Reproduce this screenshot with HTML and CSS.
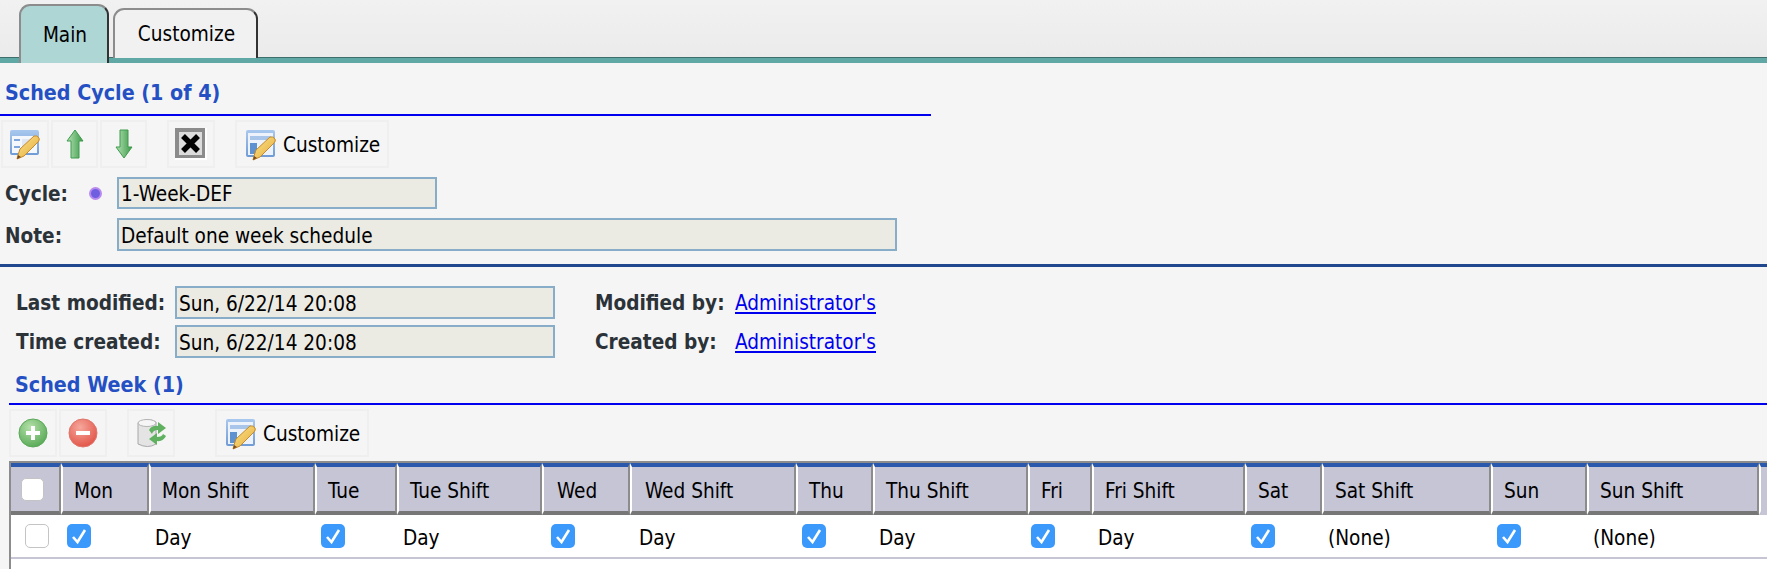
FILE: index.html
```html
<!DOCTYPE html>
<html>
<head>
<meta charset="utf-8">
<title>Sched Cycle</title>
<link rel="stylesheet" href="styles.css">
</head>
<body>

<svg class="defs" width="0" height="0">
	<defs>
		<linearGradient id="winfill" x1="0" y1="0" x2="0" y2="1">
			<stop offset="0" stop-color="#a9c8ee"/>
			<stop offset="1" stop-color="#6f9bd6"/>
		</linearGradient>
		<linearGradient id="pencil" x1="0" y1="0" x2="1" y2="1">
			<stop offset="0" stop-color="#fbe58a"/>
			<stop offset="1" stop-color="#e5a93a"/>
		</linearGradient>
		<linearGradient id="arrow" x1="0" y1="0" x2="1" y2="0">
			<stop offset="0" stop-color="#b4e2b4"/>
			<stop offset="1" stop-color="#3d9a4a"/>
		</linearGradient>
		<radialGradient id="plusfill" cx="0.4" cy="0.3" r="0.8">
			<stop offset="0" stop-color="#b4e0a8"/>
			<stop offset="1" stop-color="#4fa44f"/>
		</radialGradient>
		<radialGradient id="minusfill" cx="0.4" cy="0.3" r="0.8">
			<stop offset="0" stop-color="#f6a79c"/>
			<stop offset="1" stop-color="#e04b3f"/>
		</radialGradient>
		<symbol id="pen" viewBox="0 0 32 32">
			<path d="M9 27 L11 21 L25 8 Q28 7 30 10 Q31 12 29 14 L15 28 L8 31 Z" fill="url(#pencil)" stroke="#c58a2c" stroke-width="1"/>
			<path d="M8 31 L9 27 L12 29 Z" fill="#7a4a1e"/>
		</symbol>
		<symbol id="ico-edit" viewBox="0 0 32 32">
			<rect x="1" y="2" width="29" height="25" rx="2" fill="url(#winfill)"/>
			<rect x="3" y="8" width="25" height="17" fill="#f4f7fc"/>
			<rect x="5" y="11" width="6" height="2" fill="#7ea6dc"/>
			<rect x="5" y="18" width="6" height="2" fill="#7ea6dc"/>
			<rect x="13" y="11" width="12" height="9" fill="#dfe7f3"/>
			<use href="#pen"/>
		</symbol>
		<symbol id="ico-custom" viewBox="0 0 32 32">
			<rect x="1" y="1" width="29" height="27" rx="2" fill="url(#winfill)"/>
			<rect x="3" y="4" width="25" height="22" fill="#eef3fb"/>
			<rect x="5" y="7" width="21" height="4" fill="#a9c6ea"/>
			<rect x="5" y="14" width="7" height="11" fill="#5f90d0"/>
			<use href="#pen"/>
		</symbol>
	</defs>
</svg>

<div class="tabbar">
	<div class="tab tab-active">Main</div>
	<div class="tab">Customize</div>
</div>

<div class="heading heading-cycle">Sched Cycle (1 of 4)</div>

<div class="toolbar">
	<div class="tool"><svg class="ico" viewBox="0 0 32 32"><use href="#ico-edit"/></svg></div>
	<div class="tool tool-thin"><svg class="ico" viewBox="0 0 32 32"><path d="M16 2 L24 13 L20 13 L20 30 L12 30 L12 13 L8 13 Z" fill="url(#arrow)" stroke="#3f9a4c" stroke-width="1"/></svg></div>
	<div class="tool tool-thin"><svg class="ico" viewBox="0 0 32 32"><path d="M16 30 L24 19 L20 19 L20 2 L12 2 L12 19 L8 19 Z" fill="url(#arrow)" stroke="#3f9a4c" stroke-width="1"/></svg></div>
	<div class="tool tool-gap"><svg class="ico" viewBox="0 0 32 32"><rect x="0" y="0" width="32" height="32" fill="#fff"/><rect x="0" y="0" width="30" height="30" fill="#8b8b8b"/><rect x="4" y="4" width="23" height="23" fill="#dcdcdc"/><path d="M8 8 L23 23 M23 8 L8 23" stroke="#000" stroke-width="5.5"/></svg></div>
	<div class="tool tool-gap tool-text"><svg class="ico" viewBox="0 0 32 32"><use href="#ico-custom"/></svg>Customize</div>
</div>

<div class="form-row row-cycle">
	<span class="label">Cycle:</span>
	<span class="dot"></span>
	<div class="field field-cycle">1-Week-DEF</div>
</div>
<div class="form-row row-note">
	<span class="label">Note:</span>
	<div class="field field-note">Default one week schedule</div>
</div>

<div class="divider"></div>

<div class="meta">
	<div class="meta-row">
		<span class="label meta-label">Last modified:</span>
		<div class="field field-meta">Sun, 6/22/14 20:08</div>
		<span class="label by-label">Modified by:</span>
		<a class="link" href="#">Administrator's</a>
	</div>
	<div class="meta-row">
		<span class="label meta-label">Time created:</span>
		<div class="field field-meta">Sun, 6/22/14 20:08</div>
		<span class="label by-label">Created by:</span>
		<a class="link" href="#">Administrator's</a>
	</div>
</div>

<div class="week">
	<div class="heading heading-week">Sched Week (1)</div>

	<div class="toolbar toolbar-week">
		<div class="tool"><svg class="ico" viewBox="0 0 32 32"><circle cx="16" cy="16" r="14" fill="url(#plusfill)" stroke="#5aa85a"/><path d="M16 9 V23 M9 16 H23" stroke="#fff" stroke-width="4"/></svg></div>
		<div class="tool"><svg class="ico" viewBox="0 0 32 32"><circle cx="16" cy="16" r="14" fill="url(#minusfill)" stroke="#e0756a"/><path d="M9 16 H23" stroke="#fff" stroke-width="4"/></svg></div>
		<div class="tool tool-gap"><svg class="ico" viewBox="0 0 32 32"><path d="M3 6 Q13 0 21 5 V27 Q13 32 3 27 Z" fill="#e4e4e4" stroke="#a8a8a8"/><ellipse cx="12" cy="6" rx="9" ry="3.5" fill="#f6f6f6" stroke="#b4b4b4"/><path d="M14 13 Q17 8 23 9 V5 L31 11 L23 17 V13 Q18 13 17 17 Z" fill="#5fb05f"/><path d="M31 19 Q28 25 22 24 V28 L14 22 L22 16 V20 Q27 20 28 17 Z" fill="#5fb05f"/></svg></div>
		<div class="tool tool-gap2 tool-text"><svg class="ico" viewBox="0 0 32 32"><use href="#ico-custom"/></svg>Customize</div>
	</div>

	<table class="grid">
		<colgroup>
			<col class="c-check"><col class="c-mon"><col class="c-monshift"><col class="c-tue"><col class="c-tueshift">
			<col class="c-wed"><col class="c-wedshift"><col class="c-thu"><col class="c-thushift"><col class="c-fri">
			<col class="c-frishift"><col class="c-sat"><col class="c-satshift"><col class="c-sun"><col class="c-sunshift"><col class="c-end">
		</colgroup>
		<thead>
			<tr>
				<th class="th-check"><span class="box box-head"></span></th>
				<th>Mon</th><th>Mon Shift</th>
				<th>Tue</th><th>Tue Shift</th>
				<th class="th-wed">Wed</th><th class="th-wed">Wed Shift</th>
				<th>Thu</th><th>Thu Shift</th>
				<th>Fri</th><th>Fri Shift</th>
				<th>Sat</th><th>Sat Shift</th>
				<th>Sun</th><th>Sun Shift</th>
				<th class="th-end"></th>
			</tr>
		</thead>
		<tbody>
			<tr>
				<td class="td-first"><span class="box"></span></td>
				<td><span class="box box-on"><svg viewBox="0 0 24 24"><path d="M6 13 L10.5 18 L18 6" fill="none" stroke="#fff" stroke-width="2.6"/></svg></span></td><td>Day</td>
				<td><span class="box box-on"><svg viewBox="0 0 24 24"><path d="M6 13 L10.5 18 L18 6" fill="none" stroke="#fff" stroke-width="2.6"/></svg></span></td><td>Day</td>
				<td class="td-wed"><span class="box box-on"><svg viewBox="0 0 24 24"><path d="M6 13 L10.5 18 L18 6" fill="none" stroke="#fff" stroke-width="2.6"/></svg></span></td><td class="td-wed">Day</td>
				<td><span class="box box-on"><svg viewBox="0 0 24 24"><path d="M6 13 L10.5 18 L18 6" fill="none" stroke="#fff" stroke-width="2.6"/></svg></span></td><td>Day</td>
				<td class="td-fri"><span class="box box-on"><svg viewBox="0 0 24 24"><path d="M6 13 L10.5 18 L18 6" fill="none" stroke="#fff" stroke-width="2.6"/></svg></span></td><td>Day</td>
				<td><span class="box box-on"><svg viewBox="0 0 24 24"><path d="M6 13 L10.5 18 L18 6" fill="none" stroke="#fff" stroke-width="2.6"/></svg></span></td><td>(None)</td>
				<td><span class="box box-on"><svg viewBox="0 0 24 24"><path d="M6 13 L10.5 18 L18 6" fill="none" stroke="#fff" stroke-width="2.6"/></svg></span></td><td>(None)</td>
				<td></td>
			</tr>
			<tr class="filler"><td colspan="16"></td></tr>
		</tbody>
	</table>
</div>

</body>
</html>
```

FILE: styles.css
```css
html,body{
	margin: 0;
	height: 569px;
	overflow: hidden;
}
body{
	background: #f5f5f5;
	font-family: "DejaVu Sans", sans-serif;
	font-stretch: condensed;
	font-size: 20.6px;
	color: #000;
}
.defs{
	display: block;
	height: 0;
}

/* tabs */
.tabbar{
	display: flex;
	align-items: flex-end;
	height: 54px;
	padding: 4px 0 0 19px;
	background: linear-gradient(#f1f1f1,#ebebeb);
	border-bottom: 5px solid #5fa8a5;
	box-shadow: inset 0 -1px 0 #3d6f6d;
}
.tab{
	box-sizing: border-box;
	text-align: center;
	background: #f1f1f1;
	border: 2px solid #8c8c8c;
	border-right-color: #333;
	border-bottom: 0;
	border-radius: 11px 11px 0 0;
}
.tab-active{
	width: 90px;
	height: 59px;
	margin-bottom: -5px;
	padding: 17px 0 0 2px;
	margin-right: 4px;
	background: #aed6d5;
	position: relative;
}
.tab:not(.tab-active){
	width: 145px;
	height: 50px;
	padding: 12px 0 0 2px;
}

/* headings */
.heading{
	font-weight: bold;
	font-size: 21.3px;
	color: #2450c4;
	box-sizing: border-box;
	border-bottom: 2px solid #0000ee;
}
.heading-cycle{
	width: 931px;
	height: 53px;
	padding: 17px 0 0 5px;
}
.heading-week{
	height: 31px;
	padding: 0 0 0 6px;
	line-height: 22px;
	margin-top: 2px;
}

/* toolbars */
.toolbar{
	display: flex;
	gap: 2px;
	height: 48px;
	padding: 4px 0 0 1px;
}
.toolbar-week{
	padding-left: 0;
}
.tool{
	box-sizing: border-box;
	width: 48px;
	height: 48px;
	display: flex;
	align-items: center;
	justify-content: center;
	border: 2px solid #efefef;
}
.tool-thin{
	width: 47px;
}
.tool-gap{
	margin-left: 18px;
}
.tool-gap2{
	margin-left: 38px;
}
.tool-text{
	width: 154px;
	justify-content: flex-start;
	padding: 1px 0 0 8px;
	gap: 6px;
}
.ico{
	width: 32px;
	height: 32px;
	flex: none;
}

/* form fields */
.label{
	font-weight: bold;
	color: #2b3238;
}
.form-row{
	display: flex;
	align-items: center;
	padding-left: 5px;
}
.form-row .label{
	padding-top: 2px;
}
.row-cycle{
	margin-top: 9px;
	height: 32px;
}
.row-note{
	margin-top: 9px;
	height: 33px;
}
.row-cycle .label{
	width: 84px;
}
.row-note .label{
	width: 112px;
}
.dot{
	width: 9px;
	height: 9px;
	margin-right: 15px;
	border-radius: 50%;
	background: #6f5fe0;
	border: 2px solid #b98aee;
}
.field{
	box-sizing: border-box;
	height: 100%;
	padding: 2px 0 0 2px;
	background: #ebeae3;
	border: 2px solid #87adc9;
	display: flex;
	align-items: center;
}
.field-cycle{
	width: 320px;
}
.field-note{
	width: 780px;
}
.divider{
	height: 3px;
	margin-top: 13px;
	background: #20488f;
}

/* modified / created */
.meta{
	padding: 19px 0 0 16px;
}
.meta-row{
	display: flex;
	align-items: center;
	height: 33px;
	margin-bottom: 6px;
}
.meta-label{
	width: 159px;
}
.field-meta{
	width: 380px;
}
.by-label{
	width: 140px;
	margin-left: 40px;
}
.link{
	color: #0000ee;
}

/* sched week */
.week{
	padding: 8px 0 0 9px;
}
.grid{
	table-layout: fixed;
	width: 1758px;
	margin-top: 4px;
	border-collapse: separate;
	border-spacing: 0;
	border-top: 2px solid #8c8c8c;
	border-left: 2px solid #8c8c8c;
}
.c-check{width: 50px}
.c-mon{width: 88px}
.c-monshift{width: 166px}
.c-tue{width: 82px}
.c-tueshift{width: 145px}
.c-wed{width: 88px}
.c-wedshift{width: 166px}
.c-thu{width: 77px}
.c-thushift{width: 155px}
.c-fri{width: 64px}
.c-frishift{width: 153px}
.c-sat{width: 77px}
.c-satshift{width: 169px}
.c-sun{width: 96px}
.c-sunshift{width: 172px}
.c-end{width: 8px}
.grid th{
	box-sizing: border-box;
	height: 52px;
	padding: 3px 0 0 11px;
	text-align: left;
	font-weight: normal;
	background: #c5c5d6;
	border-top: 4px solid #2a58ac;
	border-bottom: 4px solid #777;
	border-right: 2px solid #8c8c8c;
	border-left: 2px solid #fff;
}
.grid th.th-check{
	padding: 0 0 0 10px;
	border-left: 0;
}
.grid th.th-wed{
	padding-left: 13px;
}
.grid th.th-end{
	padding: 0;
	border-right: 0;
	border-bottom-color: #c5c5d6;
}
.grid td{
	box-sizing: border-box;
	height: 44px;
	padding: 3px 0 0 6px;
	background: #fff;
	border-bottom: 2px solid #c5c5d6;
}
.grid td.td-first{
	padding-left: 14px;
}
.grid td.td-wed{
	padding-left: 9px;
}
.grid td.td-fri{
	padding-left: 3px;
}
.grid .filler td{
	height: 30px;
	border-bottom: 0;
}
.box{
	display: block;
	box-sizing: border-box;
	width: 24px;
	height: 24px;
	margin-top: -3px;
	border-radius: 5px;
	background: #fff;
	border: 1px solid #c4c4c4;
}
.box-head{
	width: 23px;
	height: 23px;
	margin-top: 0;
}
.box-on{
	background: #3b99fc;
	border: 0;
}
.box-on svg{
	display: block;
	width: 24px;
	height: 24px;
}
```
